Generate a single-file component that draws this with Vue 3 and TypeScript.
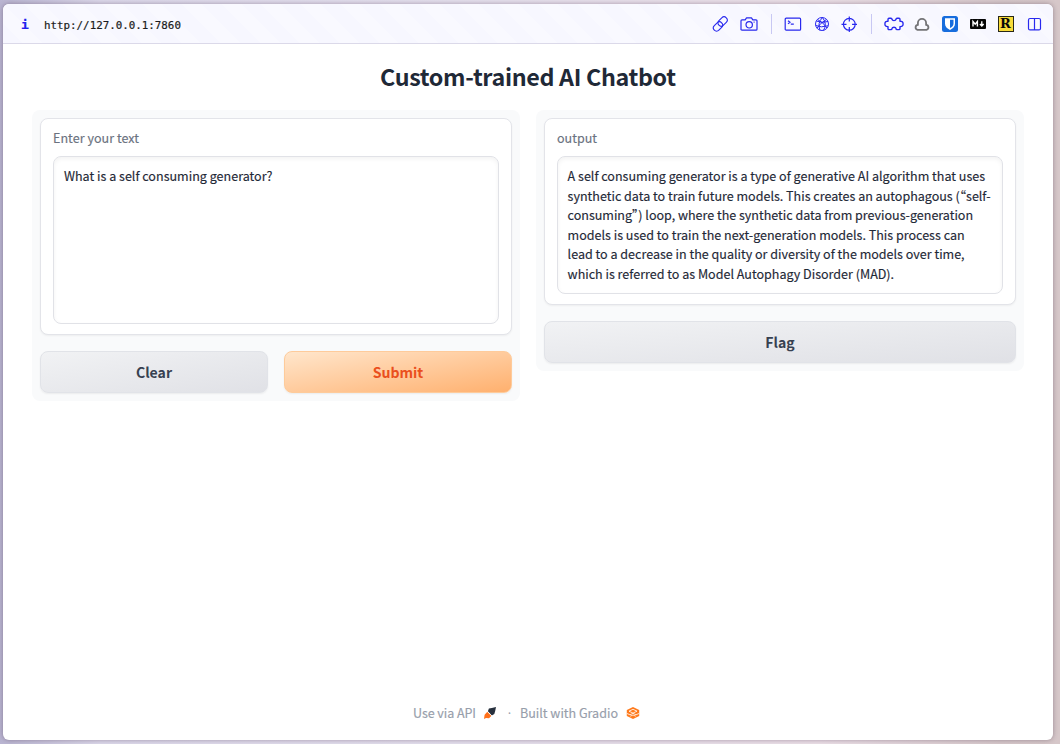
<script setup lang="ts">
import { ref } from 'vue'

const prompt = ref('What is a self consuming generator?')

interface Line {
  text: string
  width: number
}

const answer: Line[] = [
  { text: 'A self consuming generator is a type of generative AI algorithm that uses', width: 417.5 },
  { text: 'synthetic data to train future models. This creates an autophagous (“self-', width: 423 },
  { text: 'consuming”) loop, where the synthetic data from previous-generation', width: 405.5 },
  { text: 'models is used to train the next-generation models. This process can', width: 397 },
  { text: 'lead to a decrease in the quality or diversity of the models over time,', width: 397 },
  { text: 'which is referred to as Model Autophagy Disorder (MAD).', width: 326.5 },
]
</script>

<template>
  <div class="desktop">
    <div class="window">
      <header class="toolbar">
        <span class="info">i</span>
        <span class="url">http://127.0.0.1:7860</span>
        <div class="tools">
          <svg class="ic link" viewBox="0 0 16 16">
            <rect x="5.4" y="2.3" width="10.4" height="6.4" rx="3.2" transform="rotate(-45 10.6 5.5)" />
            <rect x="0.8" y="7.3" width="10.4" height="6.4" rx="3.2" transform="rotate(-45 6 10.5)" />
          </svg>
          <svg class="ic cam" viewBox="0 0 18 16">
            <path d="M2 3.8h3.2l1.3-1.9h5l1.3 1.9H16q1 0 1 1v8.4q0 1-1 1H2q-1 0-1-1V4.8q0-1 1-1z" stroke-linejoin="round" />
            <circle cx="9.2" cy="8.8" r="3.2" />
            <path d="M13.6 6.2h1" />
          </svg>
          <i class="sep"></i>
          <svg class="ic term" viewBox="0 0 18 16">
            <rect x="1.2" y="2.2" width="15.4" height="12" rx="1" />
            <path d="M4 4.7l2 1.5L4 7.7M6.8 8.2h3" />
          </svg>
          <svg class="ic globe" viewBox="0 0 16 16">
            <circle cx="8" cy="8" r="6.5" />
            <path d="M2.2 5Q8 7.5 14 5.5M1.7 9.5Q7 12 14.1 9.8M8.5 1.5Q3 7 6 14.3M8.5 1.5Q13.5 8 9.5 14.5M3.5 3.5Q9 6 13 12M12.500 3.5Q6 7 3 12.2" />
          </svg>
          <svg class="ic" viewBox="0 0 16 16">
            <circle cx="8.3" cy="8.3" r="5.9" />
            <path d="M8.3 .5v5M8.3 11.100v4.900M.5 8.3h5M11.100 8.3h4.900" />
          </svg>
          <i class="sep sep2"></i>
          <svg class="ic puzzle" viewBox="0 0 20 16">
            <path d="M5 2.2H6.9Q8 2.2 8 3.4Q8.3 4.600 10 4.6T12 3.4Q12 2.2 13.1 2.2H15Q16 2.2 16 3.4V5.2Q19.1 5 19.1 7.9T16 10.6V12.4Q16 13.6 15 13.6H13.1Q12 13.6 12 12.4Q11.7 11.2 10 11.2T8 12.4Q8 13.6 6.9 13.6H5Q4 13.6 4 12.4V10.6Q.9 10.8 .9 7.9T4 5.2V3.4Q4 2.2 5 2.2Z" stroke-linejoin="round" />
          </svg>
          <svg class="ic cloud" viewBox="0 0 16 16">
            <path d="M3.4 13.8a2.500 2.500 0 0 1 .5-4.900V7a4.100 4.100 0 0 1 8.200 0v1.900a2.500 2.500 0 0 1 .5 4.900z" stroke-linejoin="round" />
          </svg>
          <svg class="shield" viewBox="0 0 16 16">
            <rect width="16" height="16" rx="2.5" fill="#176ddd" />
            <path d="M3 2.3h10v5.4c0 3-2.2 4.8-5 6.2-2.8-1.4-5-3.2-5-6.2z" fill="#fff" />
            <path d="M8 3.8h3.5v4c0 1.9-1.4 3.2-3.5 4.3z" fill="#176ddd" />
          </svg>
          <svg class="md" viewBox="0 0 16 10">
            <rect width="16" height="10" rx="1" fill="#050505" />
            <path d="M3 7.5v-5l2.2 2.7 2.2-2.7v5M11.8 2.2v4.5M9.9 5l1.9 2 1.9-2" fill="none" stroke="#fff" stroke-width="1.4" />
          </svg>
          <span class="r-badge">R</span>
          <svg class="ic split" viewBox="0 0 16 16">
            <rect x="2.5" y="2.5" width="12" height="11.4" rx="1.5" />
            <path d="M8.5 2.5v11.4" />
          </svg>
        </div>
      </header>

      <main class="page">
        <h1><svg class="fit" width="296" height="36"><text x="0" y="27" textLength="296">Custom-trained AI Chatbot</text></svg></h1>
        <div class="columns">
          <section class="panel">
            <div class="block">
              <label><svg class="fit" width="88" height="20"><text x="0" y="14" textLength="86">Enter your text</text></svg></label>
              <div class="field input">
                <svg class="fit" width="212" height="20"><text x="0" y="15" textLength="208.5">{{ prompt }}</text></svg>
              </div>
            </div>
            <div class="actions">
              <button class="btn" type="button">Clear</button>
              <button class="btn primary" type="button">Submit</button>
            </div>
          </section>
          <section class="panel">
            <div class="block">
              <label><svg class="fit" width="42" height="20"><text x="0" y="14" textLength="40">output</text></svg></label>
              <div class="field output">
                <svg v-for="line in answer" :key="line.text" class="fit" width="430" height="20">
                  <text x="-0.4" y="15.3" :textLength="line.width">{{ line.text }}</text>
                </svg>
              </div>
            </div>
            <div class="actions">
              <button class="btn" type="button">Flag</button>
            </div>
          </section>
        </div>
        <footer>
          <svg class="fit" width="64" height="20"><text x="0" y="15" textLength="63">Use via API</text></svg>
          <svg class="rocket" viewBox="0 0 14 14">
            <path d="M1 13l.6-4.2 2.7-3 4.2 4-2.5 2.4-3-.3z" fill="#ff7019" />
            <path d="M4.9 5.2l1-2.8 2.9-.5L13 .9l-.8 4.2-.9 2.9-2.5 1.6z" fill="#27303d" />
            <path d="M4.3 5.4l4.600 4.6" stroke="#fff" stroke-width=".8" />
          </svg>
          <span class="dot">·</span>
          <svg class="fit" width="99" height="20"><text x="0" y="15" textLength="98">Built with Gradio</text></svg>
          <svg class="gradio" viewBox="0 0 14 14">
            <path d="M7 1l6.2 3.1v5.8L7 13 .8 9.9V4.1z" fill="#ff7a1c" />
            <path d="M3 5.2L7 3.3l4 1.9L7 7.1zM1 7.5l3 1.3 3-1.5 3 1.5 3-1.3M4.2 10.2L7 9l2.8 1.2" fill="none" stroke="#fff" stroke-width=".8" />
          </svg>
        </footer>
      </main>
    </div>
  </div>
</template>

<style>
html,
body {
  margin: 0;
  overflow: hidden;
}
</style>

<style scoped>
* {
  box-sizing: border-box;
}
.desktop {
  width: 1060px;
  height: 744px;
  padding: 4px 7px 4px 3px;
  background: linear-gradient(90deg, #b9b4d1 0, #dcd8eb 100px, #e5dfee 450px, #ecdfe8 820px, #d7c8cb 1000px, #d6c7c9 100%);
  font-family: "Noto Sans CJK SC", "Open Sans", sans-serif;
}
.window {
  display: flex;
  flex-direction: column;
  height: 736px;
  overflow: hidden;
  border-radius: 6px;
  background: #fff;
  box-shadow: 0 0 5px rgba(60, 40, 60, 0.4);
}
.toolbar {
  display: flex;
  align-items: center;
  flex: none;
  height: 40px;
  padding: 0 11px 0 18px;
  border-bottom: 1px solid #dbd9e9;
  background: repeating-linear-gradient(45deg, #f7f7ff 0 14px, #f9f9ff 14px 28px);
}
.info {
  width: 23px;
  padding-top: 1px;
  color: #2020ee;
  font: bold 13px "DejaVu Sans Mono", monospace;
  -webkit-text-stroke: 0.2px currentColor;
}
.url {
  padding-top: 3px;
  color: #1b1b20;
  font: 10.83px "DejaVu Sans Mono", monospace;
  -webkit-text-stroke: 0.2px currentColor;
}
.tools {
  display: flex;
  align-items: center;
  margin-left: auto;
}
.tools svg {
  flex: none;
  display: block;
}
.ic {
  width: 16px;
  height: 16px;
  fill: none;
  stroke: #2929ee;
  stroke-width: 1.2;
}
.link {
  stroke-width: 1.1;
  overflow: visible;
}
.cam {
  width: 18px;
  margin-left: 12px;
}
.sep {
  width: 1px;
  height: 20px;
  margin: 0 12px 0 13px;
  background: #c8c8f3;
}
.term {
  width: 18px;
  margin-right: 12px;
}
.globe {
  stroke-width: 1;
  margin-right: 11px;
}
.sep2 {
  margin: 0 12px 0 14px;
}
.puzzle {
  width: 20px;
  stroke-width: 1.4;
}
.cloud {
  stroke: #747477;
  stroke-width: 1.8;
  margin: 0 12px 0 10px;
}
.shield {
  width: 16px;
  height: 16px;
}
.md {
  width: 16px;
  height: 10px;
  margin: 0 12px;
}
.r-badge {
  width: 16px;
  height: 16px;
  border: 1px solid #292818;
  background: #f8dc3a;
  color: #080808;
  font: bold 13px/14px "DejaVu Serif", serif;
  text-align: center;
  text-indent: -1px;
}
.split {
  margin-left: 12px;
}
.page {
  display: flex;
  flex: 1;
  flex-direction: column;
  padding: 15px 29px 17px;
}
h1 {
  display: flex;
  justify-content: center;
  margin: 0 0 15px;
  font-size: 23.3px;
  font-weight: 700;
}
.fit {
  display: block;
  flex: none;
  overflow: visible;
  fill: currentColor;
}
label .fit,
.field .fit,
footer .fit {
  stroke: currentColor;
  stroke-width: 0.15px;
}
h1,
.field {
  color: #1f2937;
}
.columns {
  display: flex;
  align-items: flex-start;
  gap: 16px;
}
.panel {
  width: 488px;
  padding: 8px;
  border-radius: 8px;
  background: #f9fafb;
}
.block {
  padding: 10px 12px;
  border: 1px solid #e3e4e9;
  border-radius: 8px;
  background: #fff;
  box-shadow: 0 1px 2px rgba(0, 0, 0, 0.05);
}
label {
  display: block;
  height: 27px;
  color: #6b7280;
  font-size: 12.54px;
}
.field {
  padding: 9px 10px;
  border: 1px solid #e1e2e7;
  border-radius: 8px;
  box-shadow: inset 0 2px 4px rgba(0, 0, 0, 0.05);
  font-size: 12.54px;
}
.input {
  height: 168px;
}
.output {
  display: grid;
  grid-auto-rows: 19.6px;
  height: 138px;
}
.actions {
  display: flex;
  gap: 16px;
  margin-top: 16px;
}
.btn {
  flex: 1;
  height: 42px;
  padding: 0;
  border: 1px solid #e1e3e8;
  border-radius: 8px;
  background: linear-gradient(to bottom right, #f1f2f4, #e0e1e6);
  box-shadow: 0 1px 2px rgba(0, 0, 0, 0.06);
  color: #374151;
  font: 700 14.05px/38px "Noto Sans CJK SC", sans-serif;
}
.primary {
  border-color: #fecb9b;
  background: linear-gradient(to bottom right, #ffe6cc, #ffb06e);
  color: #ea4f1d;
}
footer {
  display: flex;
  align-items: center;
  height: 20px;
  margin-top: auto;
  padding-left: 381px;
  color: #979eab;
  font-size: 12.54px;
}
.rocket {
  width: 14px;
  height: 14px;
  margin-left: 6px;
}
.dot {
  width: 22px;
  margin-left: 1px;
  padding-left: 1px;
  font: 13px/20px "Open Sans", sans-serif;
  text-align: center;
}
.gradio {
  width: 14px;
  height: 14px;
  margin-left: 7px;
}
</style>
